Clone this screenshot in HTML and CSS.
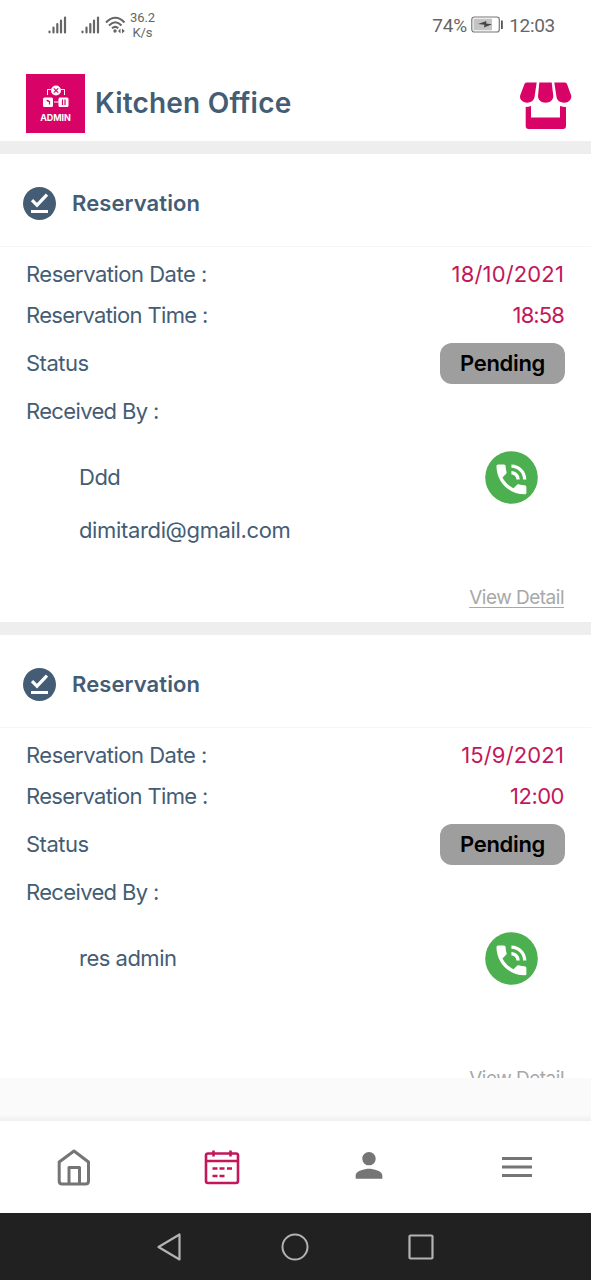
FILE: index.html
```html
<!DOCTYPE html>
<html lang="en">
<head>
<meta charset="utf-8">
<title>Kitchen Office</title>
<link rel="stylesheet" href="styles.css">
</head>
<body>
<svg class="defs" width="0" height="0">
  <symbol id="done" viewBox="0 0 33 33"><circle cx="16.5" cy="16.5" r="16.5" fill="#445d75"/><path d="M9 13.200l5 5 10-10.500" fill="none" stroke="#fff" stroke-width="3.2"/><path d="M8 24.5h17" stroke="#fff" stroke-width="3"/></symbol>
  <symbol id="phone" viewBox="0 0 53 53"><circle cx="26.5" cy="26.5" r="26.3" fill="#4caf50"/><g transform="translate(6.5 8.5) scale(1.66)"><path fill="#fff" d="M20 15.5c-1.25 0-2.45-.2-3.57-.57-.1-.03-.21-.05-.31-.05-.26 0-.51.1-.71.29l-2.2 2.2c-2.83-1.44-5.15-3.75-6.59-6.58l2.2-2.21c.28-.27.36-.66.25-1.01C8.7 6.45 8.5 5.25 8.500 4c0-.55-.45-1-1-1H4c-.55 0-1 .45-1 1 0 9.390 7.610 17 17 17 .55 0 1-.45 1-1v-3.500c0-.55-.45-1-1-1zM19 12h2c0-4.970-4.030-9-9-9v2c3.870 0 7 3.130 7 7zm-4 0h2c0-2.760-2.240-5-5-5v2c1.660 0 3 1.340 3 3z"/></g></symbol>
  <symbol id="signal" viewBox="0 0 19 18"><path d="M1.500 15.500v.8M5.500 11.500v5M9.300 8v8.500M13 4.500v12M17 1.500v15" stroke="#666" stroke-width="2.200" stroke-linecap="round"/></symbol>
</svg>
<div class="screen">
  <div class="status-bar">
    <svg class="signal" width="19" height="18"><use href="#signal"/></svg>
    <svg class="signal second" width="19" height="18"><use href="#signal"/></svg>
    <svg class="wifi" width="21" height="18" viewBox="0 0 21 18"><g fill="none" stroke="#666" stroke-width="2"><path d="M1 6.500Q10.500-3 19.500 6.500M4 9.500Q10.500 3 16.500 9.500M7 12.300Q10.300 9.500 13.300 12.300"/></g><circle cx="10" cy="15" r="1.700" fill="#666"/><path d="M15.500 12.500v5l-2.500-2.500zM17 12.500v5l2.800-2.500z" fill="#666"/></svg>
    <div class="speed">36.2<br>K/s</div>
    <span class="percent">74%</span>
    <svg class="battery" width="32" height="17" viewBox="0 0 32 17"><rect x=".8" y="1" width="27.500" height="15" rx="2.500" fill="#fff" stroke="#777" stroke-width="1.200"/><rect x="2.500" y="2.700" width="18.500" height="11.600" fill="#c4c4c4"/><path d="M7 8l8.500-3-.5 2.500 6 .8-8 3.200.5-2.800z" fill="#444"/><rect x="30" y="4.500" width="1.800" height="8.500" fill="#555"/></svg>
    <span class="clock">12:03</span>
  </div>
  <header class="app-header">
    <div class="logo">
      <svg width="26" height="23" viewBox="0 0 26 23"><path d="M4.500 10V4.500H8M18 4.500h3.500V10M11 17h5" fill="none" stroke="#fff"/><circle cx="13" cy="5.500" r="5" fill="#fff"/><rect x="0" y="12.500" width="10" height="9.500" rx="1.500" fill="#fff"/><rect x="15.500" y="12.500" width="10" height="9.500" rx="1.500" fill="#fff"/><path d="M10.800 3.300l4.400 4.400M15.200 3.300l-4.400 4.400M3.500 15l3 1.500v3M5 15v2M19.500 14.500v5.500M22 14.500v5.500" fill="none" stroke="#d90368" stroke-width="1.200"/></svg>
      <span>ADMIN</span>
    </div>
    <h1>Kitchen Office</h1>
    <svg class="store" width="53" height="48" viewBox="0 0 53 48"><g fill="#d90368"><path d="M7.500.500H17.700L15.500 15C15 18.500 12 20.700 8.200 20.700 3.500 20.700 0 17 1.300 13L5.500 2Q6 .500 7.500.500zM20.300.500H32.700L34.300 14C34.300 18 31 20.700 26.600 20.700S19 18 19 14zM35.300.500H46Q47.500.500 48 2L52.200 13.500C53 17.500 49.500 20.700 45.300 20.700 41 20.700 38 18.500 37.500 15zM6.700 25Q9.500 25 12 24V35.500H41V24Q44 25 47 25V44Q47 47 44 47H9.700Q6.700 47 6.700 44z"/></g></svg>
  </header>
  <main class="list">
    <section class="card">
      <div class="card-title"><svg width="33" height="33"><use href="#done"/></svg><h2>Reservation</h2></div>
      <div class="rows">
        <div class="row"><span class="label-date">Reservation Date :</span><span class="value date">18/10/2021</span></div>
        <div class="row"><span class="label-time">Reservation Time :</span><span class="value time">18:58</span></div>
        <div class="row status"><span class="label">Status</span><span class="pill">Pending</span></div>
        <div class="row"><span class="received">Received By :</span></div>
      </div>
      <div class="contact"><div><p>Ddd</p><p class="email">dimitardi@gmail.com</p></div><svg width="53" height="53"><use href="#phone"/></svg></div>
      <div class="detail"><a>View Detail</a></div>
    </section>
    <section class="card">
      <div class="card-title"><svg width="33" height="33"><use href="#done"/></svg><h2>Reservation</h2></div>
      <div class="rows">
        <div class="row"><span class="label-date">Reservation Date :</span><span class="value date">15/9/2021</span></div>
        <div class="row"><span class="label-time">Reservation Time :</span><span class="value">12:00</span></div>
        <div class="row status"><span class="label">Status</span><span class="pill">Pending</span></div>
        <div class="row"><span class="received">Received By :</span></div>
      </div>
      <div class="contact"><div><p>res admin</p><p></p></div><svg width="53" height="53"><use href="#phone"/></svg></div>
      <div class="detail"><a>View Detail</a></div>
    </section>
  </main>
  <div class="gap"></div>
  <nav class="tabs">
    <div><svg width="36" height="38" viewBox="0 0 36 38"><g fill="none" stroke="#757575" stroke-width="3" stroke-linejoin="round"><path d="M3.200 14L18 3l14.500 11v19q0 3-3 3H6.200q-3 0-3-3z"/><path d="M13 36V19.500h10.500V36"/></g></svg></div>
    <div><svg width="36" height="38" viewBox="0 0 36 38"><g fill="none" stroke="#c2185b" stroke-width="2.600"><rect x="2" y="5.500" width="32" height="29.500" rx="2"/><path d="M2 13h32M9.500 2.500v6M26.500 2.500v6M8.500 20.500h5M15.500 20.500h5M23 20.500h5M8.500 28h5M15.500 28h5"/></g></svg></div>
    <div><svg width="40" height="40" viewBox="0 0 24 24"><path fill="#757575" d="M12 12c2.210 0 4-1.790 4-4s-1.790-4-4-4-4 1.790-4 4 1.790 4 4 4zm0 2c-2.670 0-8 1.340-8 4v2h16v-2c0-2.660-5.330-4-8-4z" transform="translate(0 -1)"/></svg></div>
    <div><svg width="30" height="20" viewBox="0 0 30 20"><path d="M0 1.500h30M0 10h30M0 18.500h30" stroke="#757575" stroke-width="3"/></svg></div>
  </nav>
  <div class="system-nav">
    <svg width="26" height="30" viewBox="0 0 26 30"><path d="M2.500 15L23.500 2.500v25z" fill="none" stroke="#b3b3b3" stroke-width="2.200" stroke-linejoin="round"/></svg>
    <svg width="28" height="28"><circle cx="14" cy="14" r="12.500" fill="none" stroke="#b3b3b3" stroke-width="2"/></svg>
    <svg width="26" height="26"><rect x="1.500" y="1.500" width="23" height="23" rx="1" fill="none" stroke="#b3b3b3" stroke-width="2.200"/></svg>
  </div>
</div>
</body>
</html>
```
FILE: styles.css
```css
* { box-sizing: border-box; margin: 0; padding: 0; }
body { background: #fff; font-family: Inter, "Liberation Sans", sans-serif; color: #445d75; }
.defs { display: block; }
.screen { width: 591px; height: 1280px; display: flex; flex-direction: column; overflow: hidden; }
.status-bar { height: 62px; flex: none; display: flex; align-items: flex-start; padding: 0 36px 0 48px; font-family: Roboto, sans-serif; color: #666; }
.signal { margin-top: 16px; }
.second { margin-left: 14px; }
.wifi { margin: 16px 0 0 5px; }
.speed { margin: 10px 0 0 4px; font-size: 13px; line-height: 15px; text-align: center; letter-spacing: -.1px; }
.percent { margin: 13px 4px 0 auto; font-size: 19px; line-height: 25px; letter-spacing: -.1px; }
.battery { margin-top: 16px; }
.clock { margin: 13px 0 0 6px; font-size: 19px; line-height: 25px; letter-spacing: -.3px; }
.app-header { height: 79px; flex: none; display: flex; align-items: flex-start; padding: 12px 19px 0 26px; }
.logo { width: 59px; height: 59px; background: #d90368; color: #fff; display: flex; flex-direction: column; align-items: center; padding-top: 11px; font-size: 9px; font-weight: 700; line-height: 11px; letter-spacing: -.1px; }
.logo span { margin-top: 4px; }
h1 { margin-left: 10px; font-size: 28px; line-height: 59px; font-weight: 600; letter-spacing: .2px; }
.store { margin: 8px 0 0 auto; }
.list { height: 937px; flex: none; overflow: hidden; }
.card { border-top: 13px solid #eee; height: 481px; }
.card-title { height: 93px; display: flex; align-items: center; padding: 6px 23px 0; border-bottom: 1px solid #f5f5f5; }
h2 { margin-left: 16px; font-size: 22px; line-height: 30px; font-weight: 600; letter-spacing: .1px; }
.rows { padding: 7px 27px 0 26px; font-size: 22px; }
.row { height: 41px; display: flex; align-items: center; justify-content: space-between; letter-spacing: -.5px; line-height: 28px; padding-bottom: 1px; }
.row.status { height: 55px; padding-bottom: 0; }
.row .label { padding-bottom: 2px; }
.row:last-child { height: 40px; padding-bottom: 0; }
.label-time, .received { letter-spacing: -.65px; }
.value { color: #c2185b; }
.date { letter-spacing: .15px; }
.time { letter-spacing: -.9px; }
.pill { width: 125px; height: 41px; margin-right: -1px; border-radius: 12px; background: #9e9e9e; color: #000; font-weight: 600; text-align: center; line-height: 41px; letter-spacing: -.3px; }
.contact { display: flex; justify-content: space-between; padding: 20px 53px 0 79px; font-size: 22px; line-height: 53px; letter-spacing: -.5px; }
.contact p { height: 53px; }
.contact .email { letter-spacing: -.35px; }
.detail { padding: 21px 27px 0; text-align: right; font-size: 19px; line-height: 40px; color: #a8a8a8; letter-spacing: -.5px; }
.detail a { text-decoration: underline; text-underline-offset: 3px; }
.gap { height: 43px; flex: none; background: linear-gradient(#fafafa 85%, #f0f0f0); }
.tabs { height: 92px; flex: none; display: grid; grid-template-columns: repeat(4, 1fr); place-items: center; }
.tabs svg { display: block; }
.system-nav { height: 67px; flex: none; background: #212121; display: flex; align-items: center; justify-content: space-between; padding: 0 157px 0 156px; }
```
